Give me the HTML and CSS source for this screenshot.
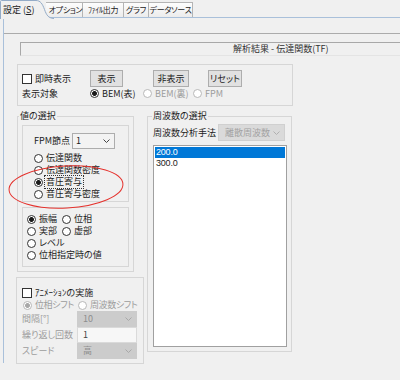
FILE: index.html
```html
<!DOCTYPE html>
<html lang="ja">
<head>
<meta charset="utf-8">
<title>設定</title>
<link rel="stylesheet" href="styles.css">
</head>
<body>
<div class="tabs">
  <div class="tab active">
    <svg class="tab-shape" width="54" height="19" viewBox="0 0 54 19"><path d="M0.5 19 V1.5 Q0.5 0.5 1.5 0.5 H36 C40.5 0.5 42.5 4 44.5 9.5 C46.5 15 48 18 54 18.5" fill="#f0f0f0" stroke="#93abc7"/></svg>
    <span class="tab-label">設定 (<u>S</u>)</span>
  </div>
  <div class="tab t2">オプション</div>
  <div class="tab t3">ﾌｧｲﾙ出力</div>
  <div class="tab t4">グラフ</div>
  <div class="tab t5">データソース</div>
</div>
<div class="page">
  <div class="toolbar"></div>
  <div class="content">
    <div class="title"><span>解析結果 - 伝達関数(TF)</span></div>
    <div class="group g1">
      <div class="row r1">
        <span class="cell w68"><span class="check"></span>即時表示</span>
        <span class="btn b1">表示</span>
        <span class="btn b2">非表示</span>
        <span class="btn b3">リセット</span>
      </div>
      <div class="row r2">
        <span class="cell w68">表示対象</span>
        <span class="opt w53"><span class="radio on"></span>BEM(表)</span>
        <span class="opt w50 dis"><span class="radio"></span>BEM(裏)</span>
        <span class="opt dis"><span class="radio"></span>FPM</span>
      </div>
    </div>
    <div class="columns">
      <div class="leftcol">
        <fieldset class="fs val">
          <legend>値の選択</legend>
          <div class="inner in1">
            <div class="row fpm">
              <span class="w38">FPM節点</span>
              <div class="select s-fpm"><span>1</span><svg width="7" height="4" viewBox="0 0 7 4"><path d="M0.5 0.5 L3.5 3.5 L6.5 0.5" fill="none" stroke="#444"/></svg></div>
            </div>
            <div class="radios">
              <div class="opt rr"><span class="radio"></span>伝達関数</div>
              <div class="opt rr"><span class="radio"></span>伝達関数密度</div>
              <div class="opt rr"><span class="radio on"></span><span class="focus">音圧寄与</span></div>
              <div class="opt rr"><span class="radio"></span>音圧寄与密度</div>
            </div>
          </div>
          <div class="inner in2">
            <div class="row rr"><span class="opt w35"><span class="radio on"></span>振幅</span><span class="opt"><span class="radio"></span>位相</span></div>
            <div class="row rr"><span class="opt w35"><span class="radio"></span>実部</span><span class="opt"><span class="radio"></span>虚部</span></div>
            <div class="row rr"><span class="opt"><span class="radio"></span>レベル</span></div>
            <div class="row rr"><span class="opt"><span class="radio"></span>位相指定時の値</span></div>
          </div>
        </fieldset>
        <div class="group anim">
          <div class="row ck"><span class="check"></span>ｱﾆﾒｰｼｮﾝの実施</div>
          <div class="row rr dis tight"><span class="opt w56"><span class="radio on"></span>位相シフト</span><span class="opt"><span class="radio"></span>周波数シフト</span></div>
          <div class="row fld"><span class="lbl">間隔[°]</span><div class="select dsel"><span>10</span><svg width="7" height="4" viewBox="0 0 7 4"><path d="M0.5 0.5 L3.5 3.5 L6.5 0.5" fill="none" stroke="#a8a8a8"/></svg></div></div>
          <div class="row fld"><span class="lbl">繰り返し回数</span><div class="edit">1</div></div>
          <div class="row fld"><span class="lbl">スピード</span><div class="select dsel"><span>高</span><svg width="7" height="4" viewBox="0 0 7 4"><path d="M0.5 0.5 L3.5 3.5 L6.5 0.5" fill="none" stroke="#a8a8a8"/></svg></div></div>
        </div>
      </div>
      <fieldset class="fs freq">
        <legend>周波数の選択</legend>
        <div class="row method">
          <span class="w65">周波数分析手法</span>
          <div class="select fsel"><span>離散周波数</span><svg width="7" height="4" viewBox="0 0 7 4"><path d="M0.5 0.5 L3.5 3.5 L6.5 0.5" fill="none" stroke="#b0b0b0"/></svg></div>
        </div>
        <div class="list">
          <div class="item sel">200.0</div>
          <div class="item">300.0</div>
        </div>
      </fieldset>
    </div>
  </div>
</div>
<svg class="annot" width="400" height="380" viewBox="0 0 400 380"><ellipse cx="66" cy="187" rx="57" ry="21" transform="rotate(-3 66 187)" fill="none" stroke="#e5322d" stroke-width="1"/></svg>
</body>
</html>
```
FILE: styles.css
```css
* { box-sizing: border-box; }
html, body { margin: 0; padding: 0; }
body {
  width: 400px;
  height: 380px;
  overflow: hidden;
  position: relative;
  background: #f0f0f0;
  font-family: "Noto Sans CJK JP", "Noto Sans", sans-serif;
  font-size: 9px;
  line-height: 12px;
  color: #1c1c1c;
  font-feature-settings: "palt";
}

/* tabs */
.tabs {
  display: flex;
  align-items: flex-end;
  height: 18px;
  border-bottom: 1px solid #a9c0da;
}
.tab {
  height: 15px;
  display: flex;
  align-items: center;
  justify-content: center;
  border: 1px solid #b4b4b4;
  border-bottom: none;
  border-left: none;
  background: linear-gradient(#fdfdfd, #ececec);
  font-size: 8px;
  letter-spacing: -0.3px;
  line-height: 1;
  white-space: nowrap;
}
.tab.active {
  position: relative;
  z-index: 1;
  width: 46px;
  height: 18px;
  margin-bottom: -1px;
  border: none;
  background: none;
  justify-content: flex-start;
  padding-left: 3px;
  font-size: 9px;
  letter-spacing: 0;
}
.tab-shape { position: absolute; left: 0; top: 0; }
.tab-label { position: relative; }
.t2 { width: 37px; padding-left: 3px; }
.t3 { width: 41px; }
.t4 { width: 25px; }
.t5 { width: 44px; }

/* page */
.page {
  margin-left: 3px;
  height: 345px;
  border-left: 1px solid #a9c0da;
}
.toolbar {
  height: 16px;
  border-bottom: 1px solid #ababab;
}
.title {
  margin: 8px 0 0 16px;
  height: 14px;
  border: 1px solid;
  border-color: #a8a8a8 #e4e4e4 #e4e4e4 #a8a8a8;
  border-right: none;
  padding-left: 212px;
  line-height: 12px;
  color: #333;
}

.group, .fs, .inner { border: 1px solid #d6d6d6; }
.row { display: flex; align-items: center; }
.opt { display: flex; align-items: center; white-space: nowrap; }
.cell { display: flex; align-items: center; }
.w68 { width: 68px; }
.w53 { width: 53px; }
.w50 { width: 50px; }
.w38 { width: 38px; }
.w35 { width: 35px; }
.w56 { width: 56px; }
.w65 { width: 65px; }

.radio {
  flex: none;
  width: 9px;
  height: 9px;
  border: 1px solid #333;
  border-radius: 50%;
  background: #fff;
  margin-right: 3px;
}
.radio.on { background: radial-gradient(circle, #1a1a1a 0 2.1px, #fff 2.7px); }
.dis { color: #9c9c9c; }
.dis .radio { border-color: #b8b8b8; }
.dis .radio.on { background: radial-gradient(circle, #a8a8a8 0 2.1px, #fff 2.7px); }
.check {
  flex: none;
  width: 10px;
  height: 10px;
  border: 1px solid #333;
  background: #fff;
  margin-right: 3px;
}

/* group 1 */
.g1 {
  margin: 8px 0 0 13px;
  width: 276px;
  height: 42px;
  padding: 5px 0 0 4px;
}
.r1 { height: 17px; }
.btn {
  height: 17px;
  display: flex;
  align-items: center;
  justify-content: center;
  background: #e1e1e1;
  border: 1px solid #adadad;
}
.b1 { width: 33px; }
.b2 { width: 36px; margin-left: 30px; }
.b3 { width: 34px; margin-left: 19px; }
.r2 { height: 11px; margin-top: 1px; }

/* columns */
.columns {
  display: flex;
  align-items: flex-start;
  margin: 4px 0 0 12px;
}
.leftcol { width: 128px; }
.fs {
  margin: 0;
  min-width: 0;
}
.fs legend {
  padding: 0 1px;
  line-height: 12px;
  font-size: 9px;
}
.val {
  margin-left: 1px;
  width: 117px;
  height: 162px;
  padding: 0 4px 4px 4px;
}
.val legend { margin-left: -3px; }
.inner { width: 107px; }
.in1 {
  margin-top: 3px;
  height: 77px;
  padding: 7px 0 0 11px;
}
.fpm { height: 16px; }
.select {
  display: flex;
  align-items: center;
  justify-content: space-between;
  border: 1px solid #adadad;
  background: #f3f3f3;
  padding: 0 4px 0 3px;
}
.s-fpm { width: 43px; height: 16px; }
.radios { margin-top: 3px; }
.rr { height: 12px; }
.focus { outline: 1px dotted #333; outline-offset: 0; padding: 0 1px; margin-left: -1px; }
.in2 {
  margin-top: 5px;
  height: 60px;
  padding: 5px 0 0 4px;
}

/* animation */
.anim {
  margin-top: 5px;
  width: 128px;
  height: 87px;
  padding: 8px 5px 0 5px;
}
.ck { height: 13px; }
.tight { letter-spacing: -0.4px; }
.anim .rr .opt:first-child { margin-left: 1px; width: 55px; }
.fld { height: 16px; }
.lbl { width: 55px; color: #9c9c9c; }
.dsel {
  width: 60px;
  height: 16px;
  background: #cccccc;
  border-color: #cccccc;
  color: #8e8e8e;
  padding-left: 5px;
}
.edit {
  width: 60px;
  height: 16px;
  background: #f7f7f7;
  border: 1px solid #dadada;
  padding-left: 5px;
  line-height: 14px;
  color: #444;
}

/* frequency */
.freq {
  margin-left: 3px;
  width: 145px;
  height: 242px;
  padding: 0 4px 4px 5px;
}
.freq legend { margin-left: -1px; }
.method { height: 17px; margin-top: 2px; }
.fsel {
  width: 67px;
  height: 17px;
  background: #dadada;
  border-color: #d0d0d0;
  color: #a2a2a2;
  padding-left: 6px;
}
.list {
  margin-top: 4px;
  width: 134px;
  height: 202px;
  background: #fff;
  border: 1px solid #a0a0a0;
  padding: 1px;
}
.item {
  height: 11px;
  line-height: 11px;
  padding-left: 1px;
  font-family: "Liberation Sans", Arial, sans-serif;
  font-size: 9px;
  letter-spacing: -0.2px;
}
.item.sel { background: #0078d7; color: #fff; }

.annot { position: absolute; left: 0; top: 0; pointer-events: none; }
```
